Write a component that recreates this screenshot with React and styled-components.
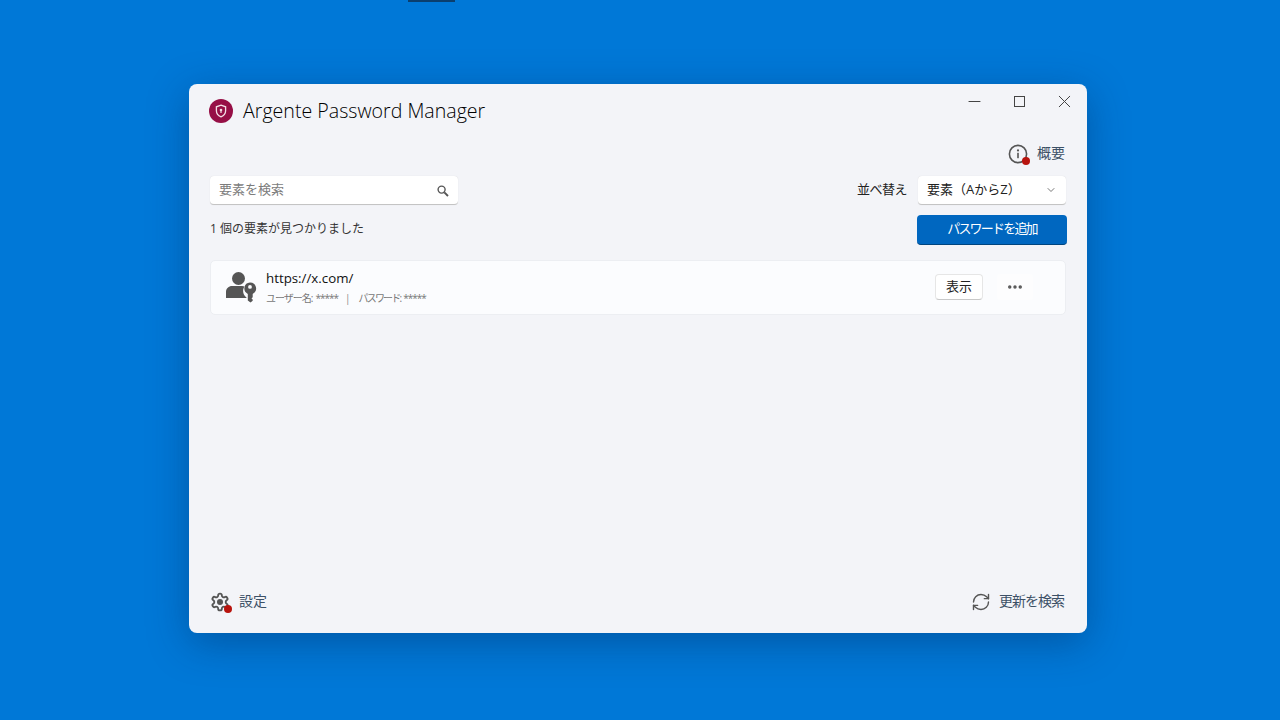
import React from 'react';
import styled, { createGlobalStyle } from 'styled-components';
import { ChevronDown, Minus, X, RefreshCw, Ellipsis } from 'lucide-react';

const FONT = `'Open Sans', 'Noto Sans CJK JP', sans-serif`;

const GlobalStyle = createGlobalStyle`
  html, body {
    margin: 0;
    padding: 0;
    height: 100%;
    overflow: hidden;
  }
  body {
    background: #0078d7;
    font-family: ${FONT};
  }
`;

function ShieldLogo() {
  return (
    <svg width="24" height="24" viewBox="0 0 24 24">
      <circle cx="12" cy="12" r="12" fill="#960f46" />
      <path d="M12 6.2l4.6 1.6v4c0 3-2 5-4.6 6-2.6-1-4.6-3-4.6-6v-4z" fill="none" stroke="#f3dfe6" strokeWidth="1.3" />
      <circle cx="12" cy="11" r="1.3" fill="#f3dfe6" />
      <rect x="11.4" y="11" width="1.2" height="3" fill="#f3dfe6" />
    </svg>
  );
}

function InfoIcon() {
  return (
    <svg width="20" height="20" viewBox="0 0 20 20">
      <circle cx="10" cy="10" r="8.6" fill="none" stroke="#555" strokeWidth="1.6" />
      <rect x="9.2" y="8.8" width="1.6" height="5.4" fill="#555" />
      <circle cx="10" cy="6.4" r="1.1" fill="#555" />
    </svg>
  );
}

function GearIcon() {
  return (
    <svg width="20" height="20" viewBox="0 0 24 24" fill="none" stroke="#555" strokeWidth="2.2" strokeLinejoin="round">
      <path d="M12.22 2h-.44a2 2 0 0 0-2 2v.18a2 2 0 0 1-1 1.73l-.43.25a2 2 0 0 1-2 0l-.15-.08a2 2 0 0 0-2.73.73l-.22.38a2 2 0 0 0 .73 2.73l.15.1a2 2 0 0 1 1 1.72v.51a2 2 0 0 1-1 1.74l-.15.09a2 2 0 0 0-.73 2.73l.22.38a2 2 0 0 0 2.73.73l.15-.08a2 2 0 0 1 2 0l.43.25a2 2 0 0 1 1 1.73V20a2 2 0 0 0 2 2h.44a2 2 0 0 0 2-2v-.18a2 2 0 0 1 1-1.73l.43-.25a2 2 0 0 1 2 0l.15.08a2 2 0 0 0 2.73-.73l.22-.39a2 2 0 0 0-.73-2.73l-.15-.08a2 2 0 0 1-1-1.74v-.5a2 2 0 0 1 1-1.74l.15-.09a2 2 0 0 0 .73-2.73l-.22-.38a2 2 0 0 0-2.73-.73l-.15.08a2 2 0 0 1-2 0l-.43-.25a2 2 0 0 1-1-1.73V4a2 2 0 0 0-2-2z" />
      <circle cx="12" cy="12" r="3.6" fill="#555" stroke="none" />
    </svg>
  );
}

function SearchGlyph() {
  return (
    <svg width="12" height="12" viewBox="0 0 12 12" fill="none" stroke="#555">
      <circle cx="4.600" cy="4.600" r="3.500" strokeWidth="1.400" />
      <path d="M7.300 7.300L11 11" strokeWidth="1.900" />
    </svg>
  );
}

function UserKeyIcon() {
  return (
    <svg width="32" height="32" viewBox="0 0 32 32" fill="#555">
      <circle cx="12.500" cy="6.500" r="6.500" />
      <path d="M0 26v-6c0-3.500 2.800-6 6-6h10c1 0 1.800.2 2.500.5-.9 1.300-1.400 2.900-1.400 4.500 0 2.800 1.400 5.200 3.400 6.500V26z" />
      <path fillRule="evenodd" d="M24 10.500a6 6 0 0 1 2.700 11.400v3.300l-1.200 1.200 1.200 1.200v1.200L24.500 30.500 21.800 28.500V21.900A6 6 0 0 1 24 10.500zm0 2.500a1.900 1.900 0 1 0 0 3.800 1.900 1.900 0 0 0 0-3.800z" />
    </svg>
  );
}

export default function App() {
  return (
    <>
      <GlobalStyle />
      <Desktop>
        <CursorSliver />
        <Window>
          <WindowControls>
            <ControlButton><Minus size={19} strokeWidth={1} absoluteStrokeWidth /></ControlButton>
            <ControlButton><MaximizeBox /></ControlButton>
            <ControlButton><X size={21} strokeWidth={1} absoluteStrokeWidth /></ControlButton>
          </WindowControls>
          <TitleRow>
            <ShieldLogo />
            <Title>Argente Password Manager</Title>
          </TitleRow>
          <AboutRow>
            <IconLink>
              <BadgeWrap>
                <InfoIcon />
                <RedDot />
              </BadgeWrap>
              <LinkText>概要</LinkText>
            </IconLink>
          </AboutRow>
          <FilterRow>
            <SearchBox>
              <Placeholder>要素を検索</Placeholder>
              <SearchGlyph />
            </SearchBox>
            <SortGroup>
              <SortLabel>並べ替え</SortLabel>
              <SortSelect>
                <span>要素（AからZ）</span>
                <ChevronDown size={12} color="#777" />
              </SortSelect>
            </SortGroup>
          </FilterRow>
          <ResultRow>
            <ResultCount>1 個の要素が見つかりました</ResultCount>
            <AddButton>パスワードを追加</AddButton>
          </ResultRow>
          <EntryCard>
            <EntryLeft>
              <UserKeyIcon />
              <EntryText>
                <EntryUrl>https://x.com/</EntryUrl>
                <EntryMeta>
                  <MetaItem>
                    <MetaLabel $squeeze={1}>ユーザー名:</MetaLabel>
                    <MetaStars>*****</MetaStars>
                  </MetaItem>
                  <MetaDivider>|</MetaDivider>
                  <MetaItem>
                    <MetaLabel $squeeze={1.8}>パスワード:</MetaLabel>
                    <MetaStars>*****</MetaStars>
                  </MetaItem>
                </EntryMeta>
              </EntryText>
            </EntryLeft>
            <EntryActions>
              <ShowButton>表示</ShowButton>
              <MoreButton><Ellipsis size={18} color="#555" strokeWidth={2.6} /></MoreButton>
            </EntryActions>
          </EntryCard>
          <Footer>
            <IconLink>
              <BadgeWrap>
                <GearIcon />
                <RedDot />
              </BadgeWrap>
              <LinkText>設定</LinkText>
            </IconLink>
            <UpdateLink>
              <RefreshCw size={20} color="#555" strokeWidth={1.4} absoluteStrokeWidth />
              <LinkText $tight>更新を検索</LinkText>
            </UpdateLink>
          </Footer>
        </Window>
      </Desktop>
    </>
  );
}

const Desktop = styled.div`
  position: relative;
  box-sizing: border-box;
  width: 1280px;
  height: 720px;
  padding: 84px 193px 87px 189px;
  background: #0078d7;
`;

const CursorSliver = styled.div`
  position: absolute;
  top: 0;
  left: 408px;
  width: 47px;
  height: 2px;
  background: #0b3f6e;
`;

const Window = styled.div`
  position: relative;
  box-sizing: border-box;
  display: flex;
  flex-direction: column;
  width: 898px;
  height: 549px;
  padding: 15px 21px 20px 21px;
  background: #f3f4f8;
  border-radius: 8px;
  box-shadow: 0 10px 40px rgba(0, 40, 90, 0.4);
`;

const WindowControls = styled.div`
  position: absolute;
  top: 5px;
  right: 0;
  display: flex;
`;

const ControlButton = styled.div`
  display: flex;
  align-items: center;
  justify-content: center;
  width: 45px;
  height: 24px;
  color: #444;
`;

const MaximizeBox = styled.span`
  box-sizing: border-box;
  width: 11px;
  height: 11px;
  border: 1px solid #444;
`;

const TitleRow = styled.div`
  display: flex;
  align-items: center;
  gap: 10px;
  height: 24px;
  margin-left: -1px;
`;

const Title = styled.div`
  font-size: 19.6px;
  font-weight: 350;
  line-height: 22px;
  color: #000;
  white-space: nowrap;
`;

const AboutRow = styled.div`
  display: flex;
  justify-content: flex-end;
  margin-top: 21px;
  height: 20px;
  padding-right: 1px;
`;

const IconLink = styled.div`
  display: flex;
  align-items: center;
  gap: 9px;
`;

const UpdateLink = styled(IconLink)`
  gap: 8px;
  padding-right: 2px;
`;

const BadgeWrap = styled.div`
  position: relative;
  display: flex;
  width: 20px;
  height: 20px;
`;

const RedDot = styled.span`
  position: absolute;
  right: -2px;
  bottom: -1px;
  width: 8px;
  height: 8px;
  border-radius: 50%;
  background: #b8140e;
`;

const LinkText = styled.span`
  font-size: 14px;
  line-height: 16px;
  padding-bottom: 3px;
  color: #3c5066;
  letter-spacing: ${(props) => (props.$tight ? '-1px' : '0')};
`;

const FilterRow = styled.div`
  display: flex;
  align-items: center;
  justify-content: space-between;
  margin-top: 12px;
`;

const Field = styled.div`
  box-sizing: border-box;
  display: flex;
  align-items: center;
  justify-content: space-between;
  height: 29px;
  background: #fff;
  border-radius: 4px;
  border-bottom: 1px solid #c4c4c4;
  box-shadow: 0 0 1px rgba(0, 0, 0, 0.15);
`;

const SearchBox = styled(Field)`
  width: 248px;
  padding: 1px 9px 0 9px;
`;

const Placeholder = styled.span`
  font-size: 13px;
  line-height: 16px;
  padding-bottom: 3px;
  color: #7c7c7c;
`;

const SortGroup = styled.div`
  display: flex;
  align-items: center;
  gap: 11px;
`;

const SortLabel = styled.span`
  font-size: 13px;
  line-height: 16px;
  padding-bottom: 3px;
  letter-spacing: -0.5px;
  color: #222;
`;

const SortSelect = styled(Field)`
  width: 148px;
  padding: 0 9px;
  font-size: 13px;
  line-height: 16px;
  color: #222;

  span {
    padding-bottom: 2px;
  }
`;

const ResultRow = styled.div`
  display: flex;
  align-items: center;
  justify-content: space-between;
  margin-top: 10px;
`;

const ResultCount = styled.span`
  font-size: 12px;
  line-height: 16px;
  padding-bottom: 2px;
  color: #333;
`;

const AddButton = styled.button`
  width: 150px;
  height: 30px;
  margin-right: -1px;
  padding: 0 0 4px;
  border: 0;
  border-bottom: 1px solid #00457f;
  border-radius: 4px;
  background: #0067c0;
  color: #fff;
  font-family: ${FONT};
  font-size: 13px;
  letter-spacing: -1.8px;
`;

const EntryCard = styled.div`
  box-sizing: border-box;
  display: flex;
  align-items: center;
  justify-content: space-between;
  height: 55px;
  margin-top: 15px;
  padding: 0 32px 0 15px;
  background: #fbfcfe;
  border: 1px solid #eceef2;
  border-radius: 5px;
`;

const EntryLeft = styled.div`
  display: flex;
  align-items: center;
  gap: 8px;
`;

const EntryText = styled.div`
  display: flex;
  flex-direction: column;
  gap: 5px;
  margin-bottom: 1px;
`;

const EntryUrl = styled.span`
  font-size: 13.3px;
  line-height: 16px;
  color: #111;
`;

const EntryMeta = styled.div`
  display: flex;
  gap: 8px;
  font-size: 10px;
  line-height: 14px;
  color: #777;
`;

const MetaItem = styled.div`
  display: flex;
  gap: 3px;
`;

const MetaLabel = styled.span`
  letter-spacing: ${(props) => -props.$squeeze}px;
`;

const MetaStars = styled.span`
  letter-spacing: -1px;
`;

const MetaDivider = styled.span`
  margin-left: -1px;
  color: #888;
`;

const EntryActions = styled.div`
  display: flex;
  align-items: center;
  gap: 14px;
  margin-bottom: 2px;
`;

const ShowButton = styled.button`
  width: 48px;
  height: 26px;
  padding: 0 0 2px;
  background: #fff;
  border: 1px solid #e6e6e6;
  border-bottom-color: #c8c8c8;
  border-radius: 4px;
  font-family: ${FONT};
  font-size: 13px;
  color: #222;
`;

const MoreButton = styled.div`
  display: flex;
  align-items: center;
  justify-content: center;
  width: 36px;
  height: 26px;
  background: #fdfdfe;
  border-radius: 4px;
`;

const Footer = styled.div`
  display: flex;
  align-items: center;
  justify-content: space-between;
  margin-top: auto;
  margin-bottom: -1px;
  height: 24px;
`;
